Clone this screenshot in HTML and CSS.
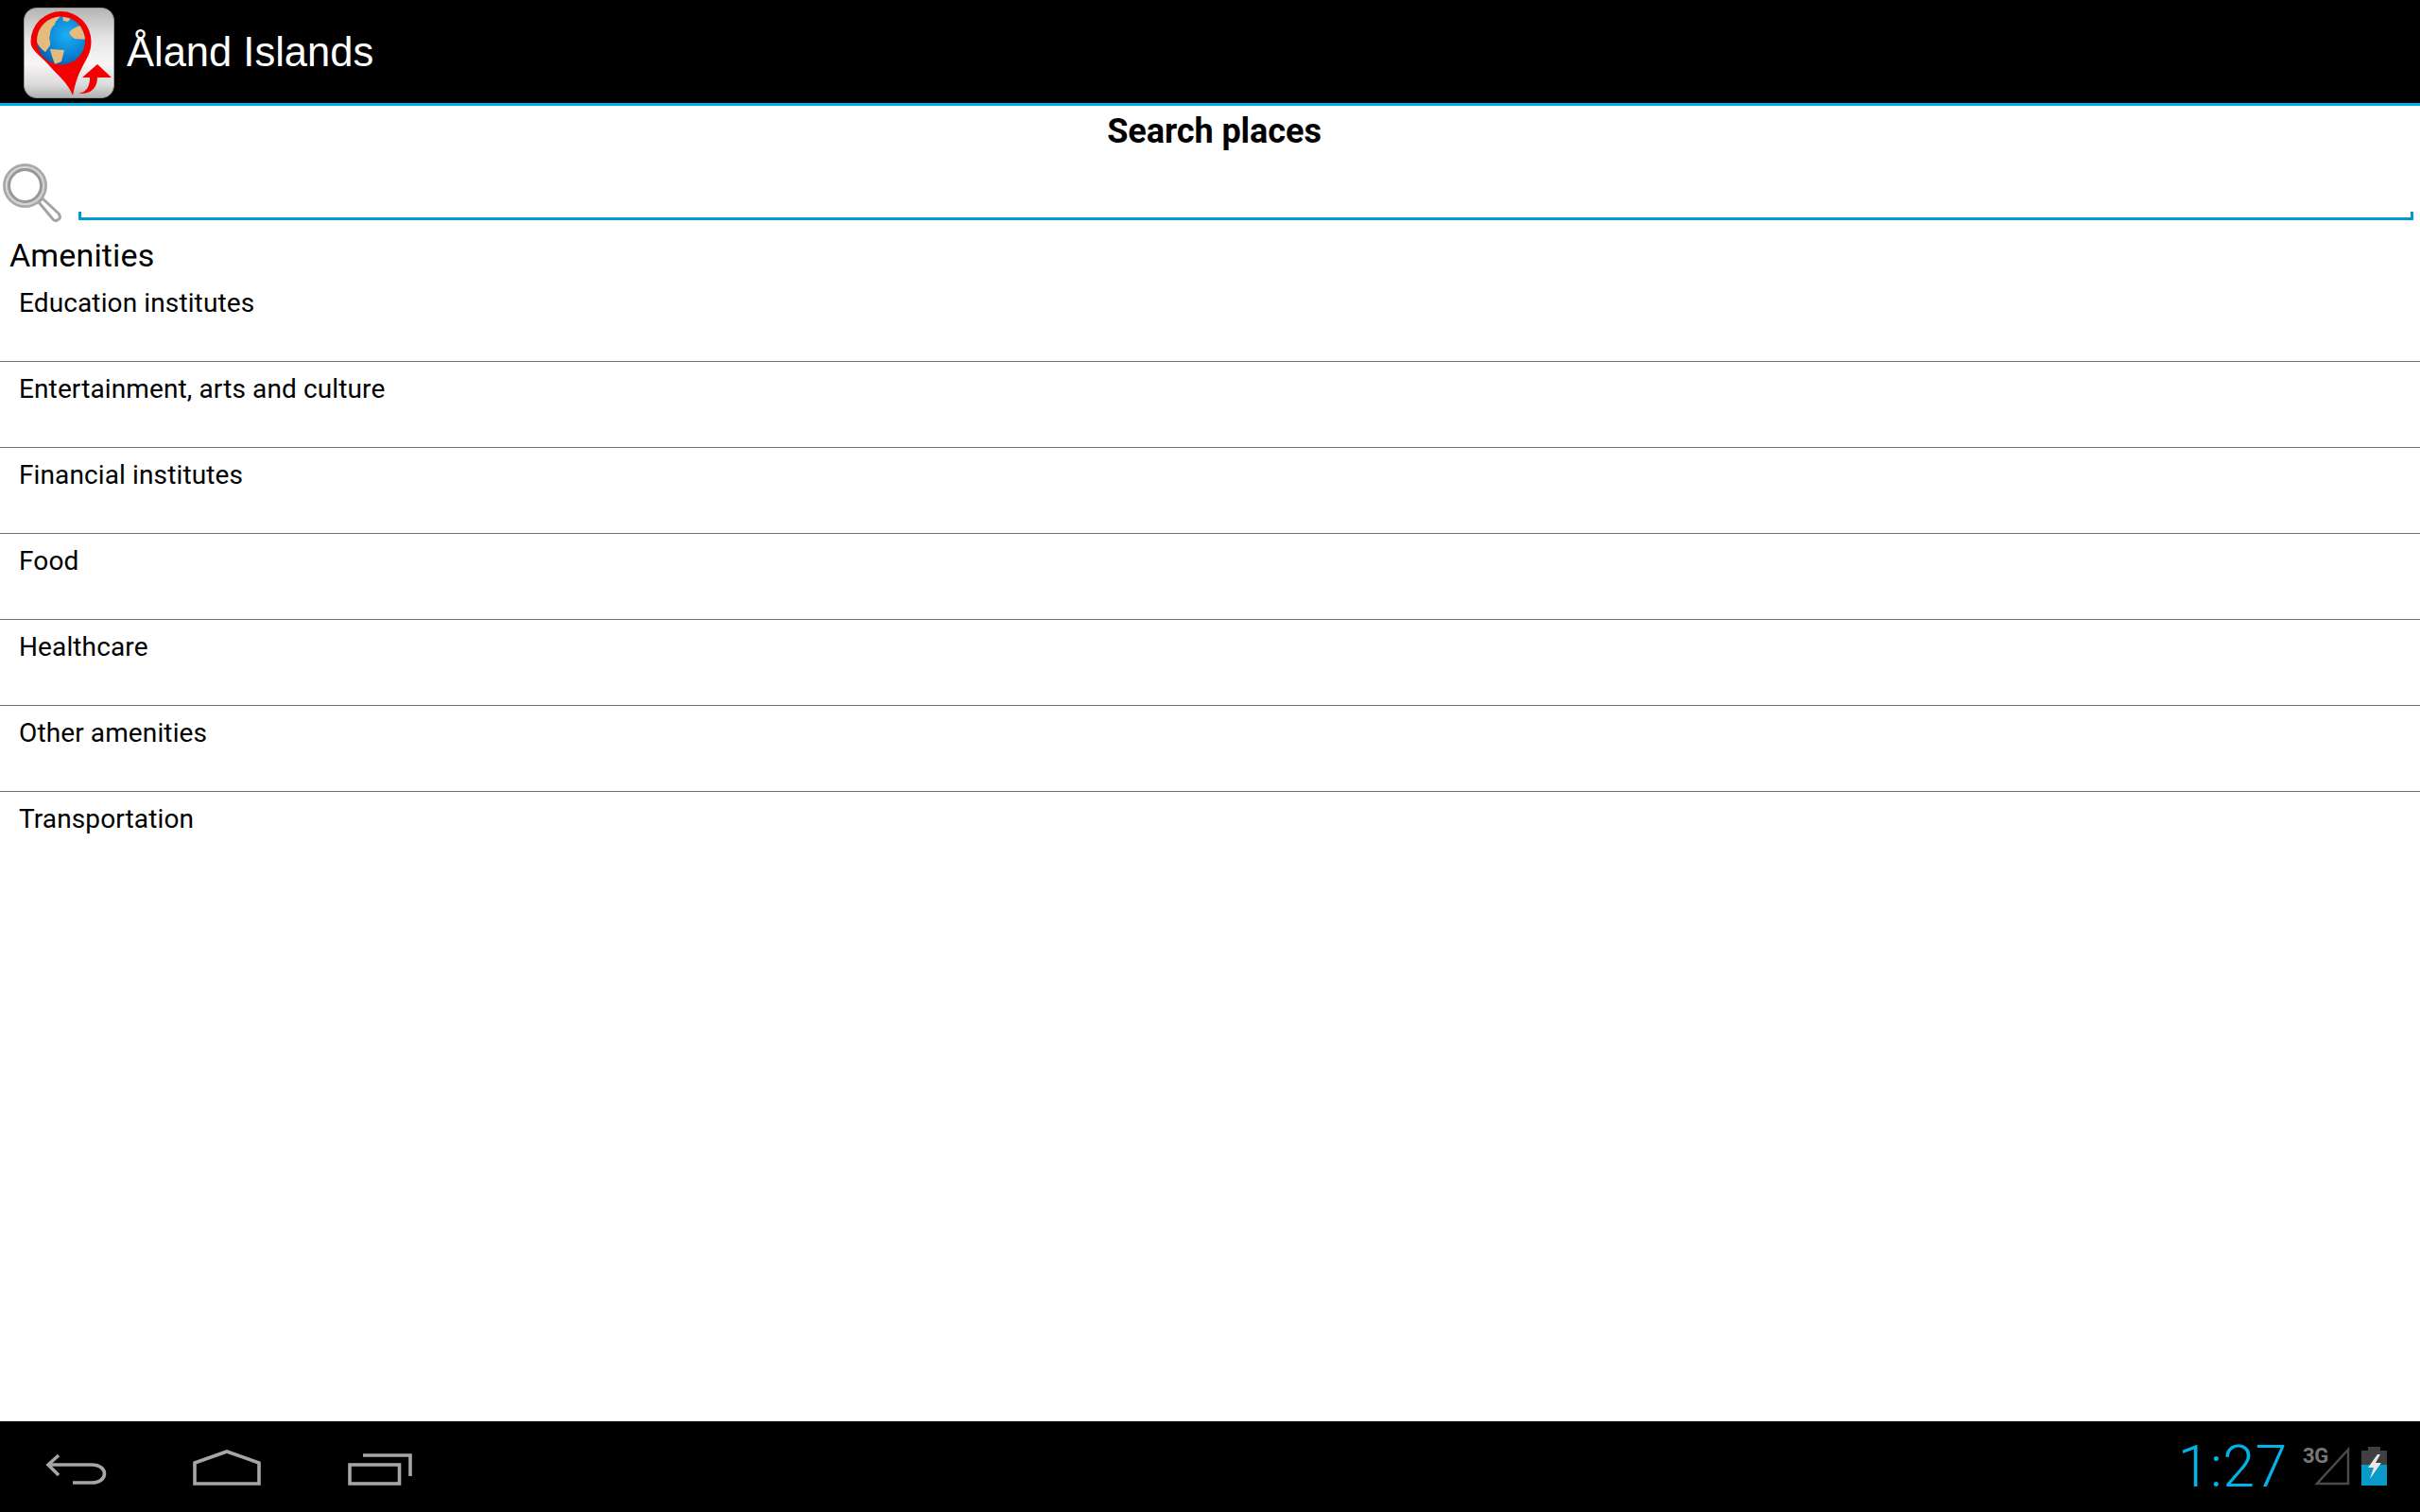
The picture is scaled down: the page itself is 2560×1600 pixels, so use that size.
FILE: index.html
```html
<!DOCTYPE html>
<html lang="en">
<head>
<meta charset="utf-8">
<title>Åland Islands</title>
<link rel="stylesheet" href="styles.css">
</head>
<body>
<div class="screen">
  <header class="appbar">
    <svg class="applogo" viewBox="0 0 96 96" width="96" height="96">
      <defs>
        <linearGradient id="tile" x1="0" y1="0" x2="0" y2="1">
          <stop offset="0" stop-color="#b4b4b4"/><stop offset=".35" stop-color="#e6e6e6"/>
          <stop offset=".62" stop-color="#f8f5f5"/><stop offset=".85" stop-color="#dcdcdc"/><stop offset="1" stop-color="#b0b0b0"/>
        </linearGradient>
        <radialGradient id="sea" cx=".62" cy=".38" r=".75">
          <stop offset="0" stop-color="#1cb0f4"/><stop offset=".6" stop-color="#0a80d2"/><stop offset="1" stop-color="#06529c"/>
        </radialGradient>
        <clipPath id="globe"><circle cx="39.5" cy="35" r="25.5"/></clipPath>
      </defs>
      <rect x=".5" y=".5" width="95" height="95" rx="13" fill="url(#tile)" stroke="#9a9a9a"/>
      <path d="M52 93 C46 78 34 70 24 58 C14 48 7.5 44 7.5 36 A32 32 0 0 1 71.5 36 C71.5 48 66 55 62 63 C57 72 54 82 52 93Z" fill="#f50000"/>
      <circle cx="39.5" cy="35" r="25.5" fill="url(#sea)"/>
      <g clip-path="url(#globe)" fill="#e6bc7c">
        <path d="M28 9 L39 9 C37 13 33 14 33 18 C29 21 28 25 28 29 C26 33 29 37 28 40 L23 47 C18 44 13 38 13 32 C13 22 20 13 28 9Z"/>
        <path d="M28 44 L43 45 L40 57 L33 60 C31 54 29 49 28 44Z"/>
        <path d="M48 26 C52 22 56 20 60 19 L67 34 L54 33 C51 31 49 29 48 26Z"/>
        <path d="M41 10 L50 11 L47 15 L42 14Z"/>
      </g>
      <path d="M58 91 C68 89 70 82 70 74 H62 L78 60 L93 74 H78 C78 86 70 92 58 91Z" fill="#f50000"/>
    </svg>
    <h1 class="apptitle">Åland Islands</h1>
  </header>
  <main class="content">
    <h2 class="pagetitle">Search places</h2>
    <div class="searchrow">
      <svg class="searchicon" viewBox="0 0 64 64" width="64" height="64" fill="none">
        <circle cx="23.5" cy="25.5" r="19.5" fill="#fff" stroke="#d4d4d4" stroke-width="8"/>
        <circle cx="23.5" cy="25.5" r="22" stroke="#a8a8a8" stroke-width="2.5"/>
        <circle cx="23.5" cy="25.5" r="17" stroke="#999" stroke-width="3"/>
        <path d="M38 43 L42 39 L59 55 Q62 59 59 61 Q56 64 53 61 Z" fill="#fff" stroke="#a4a4a4" stroke-width="3" stroke-linejoin="round"/>
      </svg>
      <div class="searchfield"></div>
    </div>
    <h3 class="section">Amenities</h3>
    <ul class="list">
      <li class="row">Education institutes</li>
      <li class="row">Entertainment, arts and culture</li>
      <li class="row">Financial institutes</li>
      <li class="row">Food</li>
      <li class="row">Healthcare</li>
      <li class="row">Other amenities</li>
      <li class="row">Transportation</li>
    </ul>
  </main>
  <footer class="sysbar">
    <nav class="navkeys">
      <svg class="key" width="66" height="44" viewBox="0 0 66 44" fill="none" stroke="#a6a6a6" stroke-width="3.6">
        <path d="M15 7 L4 17 L15 28"/>
        <path d="M4 17 H50 C68 17 68 36 50 36 H30"/>
      </svg>
      <svg class="key" width="72" height="44" viewBox="0 0 72 44" fill="none" stroke="#a6a6a6" stroke-width="3.6">
        <path d="M2 15 L36 3 L70 15 V37 H2 Z"/>
      </svg>
      <svg class="key" width="70" height="44" viewBox="0 0 70 44" fill="none" stroke="#a6a6a6" stroke-width="3.6">
        <path d="M17 7 H67 V29"/>
        <rect x="3" y="17" width="52.5" height="20"/>
      </svg>
    </nav>
    <div class="status">
      <span class="clock">1:27</span>
      <span class="net">3G</span>
      <svg class="signal" width="38" height="42" viewBox="0 0 38 42" fill="none" stroke="#4a4a4a" stroke-width="2.5"><path d="M36 3 V39 H3 Z"/></svg>
      <svg class="battery" width="27" height="42" viewBox="0 0 27 42">
        <path d="M7 0 H20 V4 H27 V41 H0 V4 H7Z" fill="#404040"/>
        <rect y="19" width="27" height="22" fill="#0a9ac8"/>
        <path d="M17 8 L7 22 H13 L9 34 L21 17 H15 L20 8Z" fill="#e8e8e8"/>
      </svg>
    </div>
  </footer>
</div>
</body>
</html>
```
FILE: styles.css
```css
* { box-sizing: border-box; }
html, body { margin: 0; padding: 0; }
body { background: #fff; font-family: Roboto, "Liberation Sans", sans-serif; color: #000; }
.screen { width: 2560px; height: 1600px; display: flex; flex-direction: column; overflow: hidden; }
.appbar { height: 112px; flex: none; background: #000; border-bottom: 3px solid #00b0e6; display: flex; align-items: flex-start; padding: 8px 0 0 25px; gap: 13px; }
.applogo { display: block; flex: none; }
.apptitle { margin: 0; font: 400 43.5px/94px "Liberation Sans", Arial, sans-serif; color: #fff; }
.content { flex: 1; min-height: 0; }
.pagetitle { margin: 0; height: 54px; font-size: 36px; line-height: 54px; font-weight: 700; text-align: center; padding-left: 9px; letter-spacing: -.05px; }
.searchrow { height: 69px; display: flex; align-items: flex-end; padding: 0 7px 0 3px; gap: 16px; }
.searchicon { flex: none; }
.searchfield { flex: 1; height: 9px; margin-bottom: 2px; border: solid #009ad6; border-width: 0 3px 3px 3px; }
.section { margin: 0; height: 57px; padding: 11px 0 0 10px; font-size: 34px; line-height: 48px; font-weight: 400; color: #000; letter-spacing: .15px; }
.list { margin: 0; padding: 0; list-style: none; }
.row { height: 91px; padding: 9px 0 0 20px; font-size: 28px; line-height: 40px; color: #000; letter-spacing: .12px; border-bottom: 1px solid #707070; }
.row:last-child { border-bottom: 0; }
.sysbar { height: 96px; flex: none; background: #000; display: flex; justify-content: space-between; align-items: center; }
.navkeys { display: flex; align-items: center; padding: 6px 0 0 47px; gap: 91px; }
.status { display: flex; align-items: center; padding-right: 35px; }
.clock { font-size: 61px; line-height: 96px; font-weight: 300; color: #00b4ea; letter-spacing: .5px; }
.net { font-size: 22px; font-weight: 700; color: #777; align-self: flex-start; margin: 24px 0 0 16px; letter-spacing: -.3px; }
.signal { margin-left: -15px; }
.battery { margin-left: 12px; }
```
